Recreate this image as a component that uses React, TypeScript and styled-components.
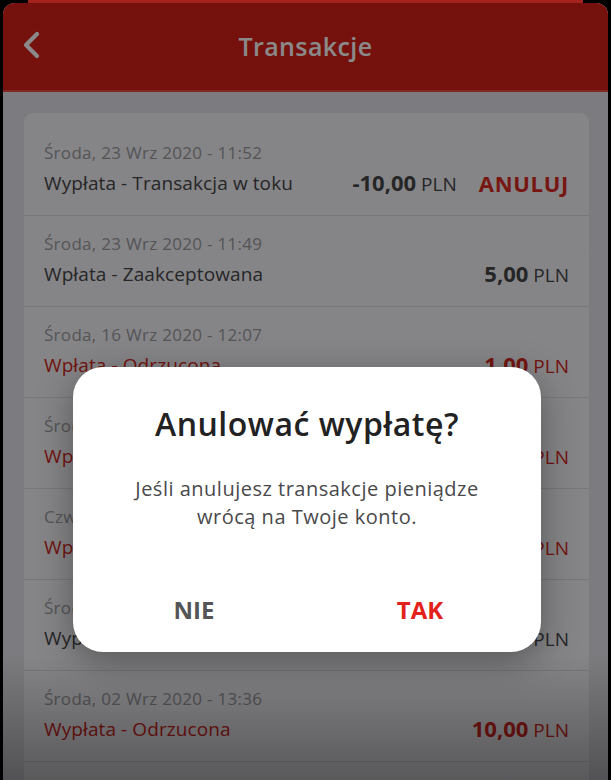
import styled, { createGlobalStyle } from 'styled-components';

const GlobalStyle = createGlobalStyle`
  html, body {
    margin: 0;
    padding: 0;
    background: #000;
    height: 100%;
    overflow: hidden;
  }
  #root {
    height: 100%;
  }
  * {
    box-sizing: border-box;
  }
`;

const Page = styled.div`
  height: 100vh;
  display: flex;
  flex-direction: column;
  font-family: 'Open Sans', 'Liberation Sans', sans-serif;
`;

// sliver of the screen that sits behind the presented sheet
const BehindSheet = styled.div`
  height: 3px;
  margin: 0 28px;
  background: #a3231e;
  flex-shrink: 0;
`;

const Sheet = styled.div`
  position: relative;
  flex: 1;
  margin: 0 3px;
  border-radius: 12px 12px 0 0;
  overflow: hidden;
  background: #e4e2e8;
  display: flex;
  flex-direction: column;
`;

const Header = styled.header`
  height: 89px;
  flex-shrink: 0;
  display: grid;
  grid-template-columns: 60px 1fr 60px;
  align-items: center;
  background: #d91f18;
  border-bottom: 2px solid #f24a40;
  color: #fff;
`;

const BackButton = styled.button`
  display: flex;
  align-items: center;
  justify-content: center;
  width: 40px;
  height: 40px;
  margin-left: 9px;
  margin-top: -4px;
  padding: 0;
  border: 0;
  background: none;
  color: #fff;
`;

const Title = styled.h1`
  margin: 0;
  margin-top: -1px;
  text-align: center;
  font-size: 25px;
  font-weight: 600;
  letter-spacing: 0.4px;
`;

const Content = styled.main`
  padding: 21px 19px 0 21px;
`;

const Card = styled.section`
  background: #f6f5fa;
  border-radius: 9px;
  padding-top: 12px;
`;

const Row = styled.div`
  display: flex;
  flex-direction: column;
  justify-content: center;
  gap: 5px;
  height: 91px;
  padding: 0 20px 2px 20px;
  border-bottom: 1px solid #dedde3;
`;

const DateLine = styled.div`
  font-size: 17px;
  letter-spacing: 0.3px;
  color: #9c9c9f;
  line-height: 22px;
`;

const MainLine = styled.div`
  display: flex;
  align-items: center;
  line-height: 26px;
`;

const Label = styled.span<{ $rejected?: boolean }>`
  flex: 1;
  font-size: 19px;
  letter-spacing: 0.1px;
  color: ${(p) => (p.$rejected ? '#d32620' : '#464648')};
`;

const Amount = styled.span<{ $rejected?: boolean }>`
  font-size: 22px;
  font-weight: 700;
  color: ${(p) => (p.$rejected ? '#d32620' : '#464648')};

  small {
    font-size: 19px;
    font-weight: 400;
    margin-left: 5px;
  }
`;

const CancelLink = styled.span`
  margin-left: 22px;
  font-size: 22px;
  font-weight: 700;
  letter-spacing: 0.7px;
  color: #db2a22;
`;

const Dimmer = styled.div`
  position: absolute;
  inset: 0;
  background: linear-gradient(
    rgba(0, 0, 0, 0.46) 0%,
    rgba(0, 0, 0, 0.46) 84%,
    rgba(0, 0, 0, 0.64) 100%
  );
`;

const Dialog = styled.div`
  position: absolute;
  top: 364px;
  left: 70px;
  width: 468px;
  height: 285px;
  background: #fff;
  border-radius: 30px;
  box-shadow: 0 10px 36px rgba(0, 0, 0, 0.35);
  display: flex;
  flex-direction: column;
  align-items: center;
  padding-top: 35px;
`;

const DialogTitle = styled.h2`
  margin: 0;
  font-size: 32px;
  font-weight: 600;
  letter-spacing: 0.5px;
  color: #222;
  line-height: 44px;
`;

const DialogText = styled.p`
  margin: 29px 0 0;
  font-size: 20px;
  letter-spacing: 0.5px;
  line-height: 28px;
  color: #49494b;
  text-align: center;
`;

const DialogActions = styled.div`
  margin-top: auto;
  width: 100%;
  display: grid;
  grid-template-columns: 1fr 1fr;
  padding: 0 8px 26px;
`;

const DialogButton = styled.button<{ $primary?: boolean }>`
  border: 0;
  background: none;
  font-family: inherit;
  font-size: 24px;
  font-weight: 700;
  padding: 0;
  line-height: 32px;
  color: ${(p) => (p.$primary ? '#e3211b' : '#555557')};
`;

type Tx = {
  date: string;
  label: string;
  amount: string;
  rejected?: boolean;
  cancellable?: boolean;
};

const transactions: Tx[] = [
  { date: 'Środa, 23 Wrz 2020 - 11:52', label: 'Wypłata - Transakcja w toku', amount: '-10,00', cancellable: true },
  { date: 'Środa, 23 Wrz 2020 - 11:49', label: 'Wpłata - Zaakceptowana', amount: '5,00' },
  { date: 'Środa, 16 Wrz 2020 - 12:07', label: 'Wpłata - Odrzucona', amount: '1,00', rejected: true },
  { date: 'Środa, 16 Wrz 2020 - 11:58', label: 'Wpłata - Odrzucona', amount: '1,00', rejected: true },
  { date: 'Czwartek, 10 Wrz 2020 - 09:14', label: 'Wpłata - Odrzucona', amount: '2,00', rejected: true },
  { date: 'Środa, 09 Wrz 2020 - 16:20', label: 'Wypłata - Zaakceptowana', amount: '20,00' },
  { date: 'Środa, 02 Wrz 2020 - 13:36', label: 'Wypłata - Odrzucona', amount: '10,00', rejected: true },
  { date: 'Środa, 02 Wrz 2020 - 13:30', label: 'Wpłata - Zaakceptowana', amount: '10,00' },
];

const ChevronLeft = () => (
  <svg width="20" height="28" viewBox="0 0 20 28" fill="none">
    <path d="M15 3 L4 14 L15 25" stroke="currentColor" strokeWidth="4.2" strokeLinecap="round" strokeLinejoin="round" />
  </svg>
);

export default function App() {
  return (
    <>
      <GlobalStyle />
      <Page>
        <BehindSheet />
        <Sheet>
          <Header>
            <BackButton aria-label="Wstecz">
              <ChevronLeft />
            </BackButton>
            <Title>Transakcje</Title>
            <span />
          </Header>
          <Content>
            <Card>
              {transactions.map((tx, i) => (
                <Row key={i}>
                  <DateLine>{tx.date}</DateLine>
                  <MainLine>
                    <Label $rejected={tx.rejected}>{tx.label}</Label>
                    <Amount $rejected={tx.rejected}>
                      {tx.amount}
                      <small>PLN</small>
                    </Amount>
                    {tx.cancellable && <CancelLink>ANULUJ</CancelLink>}
                  </MainLine>
                </Row>
              ))}
            </Card>
          </Content>
          <Dimmer />
          <Dialog role="dialog">
            <DialogTitle>Anulować wypłatę?</DialogTitle>
            <DialogText>
              Jeśli anulujesz transakcje pieniądze
              <br />
              wrócą na Twoje konto.
            </DialogText>
            <DialogActions>
              <DialogButton>NIE</DialogButton>
              <DialogButton $primary>TAK</DialogButton>
            </DialogActions>
          </Dialog>
        </Sheet>
      </Page>
    </>
  );
}
